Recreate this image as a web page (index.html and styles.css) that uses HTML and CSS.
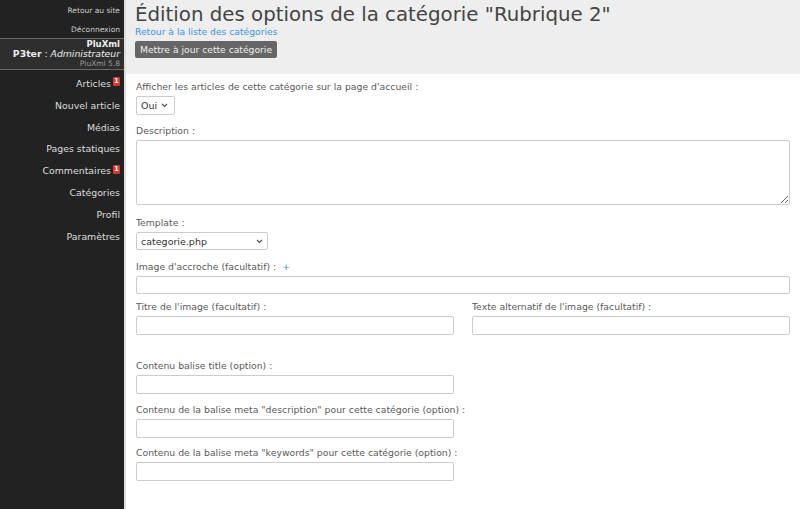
FILE: index.html
```html
<!DOCTYPE html>
<html lang="fr">
<head>
<meta charset="utf-8">
<title>PluXml - Catégorie</title>
<link rel="stylesheet" href="styles.css">
</head>
<body>
<div class="layout">
  <aside class="sidebar">
    <ul class="toplinks">
      <li><a href="#">Retour au site</a></li>
      <li><a href="#">Déconnexion</a></li>
    </ul>
    <div class="profile">
      <div class="brand">PluXml</div>
      <div class="user"><strong>P3ter</strong> : <em>Administrateur</em></div>
      <div class="version">PluXml 5.8</div>
    </div>
    <ul class="nav">
      <li><a href="#">Articles</a><span class="badge">1</span></li>
      <li><a href="#">Nouvel article</a></li>
      <li><a href="#">Médias</a></li>
      <li><a href="#">Pages statiques</a></li>
      <li><a href="#">Commentaires</a><span class="badge">1</span></li>
      <li><a href="#">Catégories</a></li>
      <li><a href="#">Profil</a></li>
      <li><a href="#">Paramètres</a></li>
    </ul>
  </aside>
  <main class="content">
    <header class="page-head">
      <h2 class="title">Édition des options de la catégorie "Rubrique 2"</h2>
      <a class="back" href="#">Retour à la liste des catégories</a>
      <button class="btn" type="button">Mettre à jour cette catégorie</button>
    </header>
    <form class="form">
      <div class="field f-home">
        <label>Afficher les articles de cette catégorie sur la page d'accueil :</label>
        <div class="selwrap sel-small">
          <select class="sel"><option>Oui</option></select>
          <svg class="chev" width="7" height="5" viewBox="0 0 7 5"><path d="M1 1 L3.5 3.5 L6 1" fill="none" stroke="#555" stroke-width="1.2"/></svg>
        </div>
      </div>
      <div class="field f-desc">
        <label>Description :</label>
        <textarea class="area"></textarea>
      </div>
      <div class="field f-tpl">
        <label>Template :</label>
        <div class="selwrap sel-tpl">
          <select class="sel"><option>categorie.php</option></select>
          <svg class="chev" width="7" height="5" viewBox="0 0 7 5"><path d="M1 1 L3.5 3.5 L6 1" fill="none" stroke="#555" stroke-width="1.2"/></svg>
        </div>
      </div>
      <div class="field f-img">
        <label>Image d'accroche (facultatif) : <a class="plus" href="#">+</a></label>
        <input class="inp inp-18" type="text">
      </div>
      <div class="row">
        <div class="field">
          <label>Titre de l'image (facultatif) :</label>
          <input class="inp" type="text">
        </div>
        <div class="field">
          <label>Texte alternatif de l'image (facultatif) :</label>
          <input class="inp" type="text">
        </div>
      </div>
      <div class="meta">
        <div class="field half">
          <label>Contenu balise title (option) :</label>
          <input class="inp" type="text">
        </div>
        <div class="field half">
          <label>Contenu de la balise meta "description" pour cette catégorie (option) :</label>
          <input class="inp" type="text">
        </div>
        <div class="field half">
          <label>Contenu de la balise meta "keywords" pour cette catégorie (option) :</label>
          <input class="inp" type="text">
        </div>
      </div>
    </form>
  </main>
</div>
</body>
</html>
```
FILE: styles.css
```css
* { box-sizing: border-box; }
html, body { margin: 0; padding: 0; height: 100%; }
body {
  font-family: "DejaVu Sans", sans-serif;
  background: #fff;
  color: #555;
  overflow: hidden;
}
.layout { display: flex; height: 509px; }
.sidebar {
  width: 124px;
  flex: none;
  background: #222;
  text-align: right;
}
.sidebar ul { list-style: none; margin: 0; }
.sidebar a { text-decoration: none; }
.sidebar .toplinks { padding: 0 4px 0 0; }
.toplinks li { height: 19px; line-height: 16px; }
.toplinks a { color: #ccc; font-size: 7.5px; }
.profile {
  background: #2e2e2e;
  border-top: 1px solid #6a6a6a;
  border-bottom: 1px solid #6a6a6a;
  padding: 1px 4px 1px 0;
  line-height: 9px;
  white-space: nowrap;
}
.profile .brand { color: #eee; font-weight: bold; font-size: 8.5px; }
.profile .user { color: #eee; font-size: 9.3px; line-height: 10px; }
.profile .version { color: #999; font-size: 7.5px; }
.sidebar .nav { padding: 3px 4px 0 0; }
.nav li { height: 21.8px; line-height: 21.8px; display: flex; justify-content: flex-end; align-items: center; }
.nav a { color: #ddd; font-size: 9.4px; }
.badge {
  display: inline-block;
  background: #e0312b;
  color: #fff;
  font-size: 7px;
  font-weight: bold;
  line-height: 9px;
  width: 7px;
  height: 9px;
  text-align: center;
  margin-left: 2px;
  margin-top: -4px;
  border-radius: 1px;
}
.content {
  flex: 1;
  border-left: 2px solid #ddd;
  display: flex;
  flex-direction: column;
}
.page-head {
  background: #eee;
  padding: 4px 10px 16px 9px;
  display: flex;
  flex-direction: column;
  align-items: flex-start;
}
.title {
  margin: 0;
  font-weight: normal;
  font-size: 19.8px;
  line-height: 22px;
  color: #444;
}
.back { color: #3c93de; font-size: 9.2px; text-decoration: none; display: block; line-height: 11px; margin-bottom: 4px; }
.btn {
  font-family: inherit;
  font-size: 9.2px;
  color: #eee;
  background: #666;
  border: none;
  border-radius: 2px;
  padding: 0 5px;
  height: 17px;
  line-height: 17px;
}
.form { padding: 8px 10px 0 10px; display: flex; flex-direction: column; }
.field { display: flex; flex-direction: column; align-items: flex-start; margin-bottom: 11px; }
.f-home { margin-bottom: 11px; }
.f-desc { margin-bottom: 13px; }
.f-tpl { margin-bottom: 12px; }
.f-img { margin-bottom: 8px; }
.field label { display: block; height: 10px; font-size: 9.3px; line-height: 10px; color: #5a5a5a; margin-bottom: 4px; white-space: nowrap; }
.plus { color: #3c93de; text-decoration: none; margin-left: 3px; }
.selwrap { position: relative; height: 19px; }
.sel {
  display: block;
  -webkit-appearance: none;
  appearance: none;
  width: 100%;
  height: 100%;
  margin: 0;
  font-family: inherit;
  font-size: 9.5px;
  color: #333;
  background: #fff;
  border: 1px solid #ccc;
  border-radius: 2px;
  padding: 0 0 0 4px;
}
.chev { position: absolute; top: 7px; right: 5px; pointer-events: none; }
.sel-small { width: 39px; }
.sel-small .chev { right: 7px; }
.sel-tpl { width: 132px; height: 18px; }
.area {
  display: block;
  width: 100%;
  height: 65px;
  border: 1px solid #ccc;
  border-radius: 2px;
  resize: vertical;
  margin: 0;
}
.inp {
  display: block;
  width: 100%;
  height: 19px;
  border: 1px solid #ccc;
  border-radius: 2px;
  margin: 0;
}
.inp-18 { height: 18px; }
.row { display: grid; grid-template-columns: 1fr 1fr; column-gap: 18px; }
.row .field { margin-bottom: 26px; }
.meta { display: flex; flex-direction: column; }
.meta .field:nth-child(2) { margin-bottom: 10px; }
.half { width: 318px; }
```
